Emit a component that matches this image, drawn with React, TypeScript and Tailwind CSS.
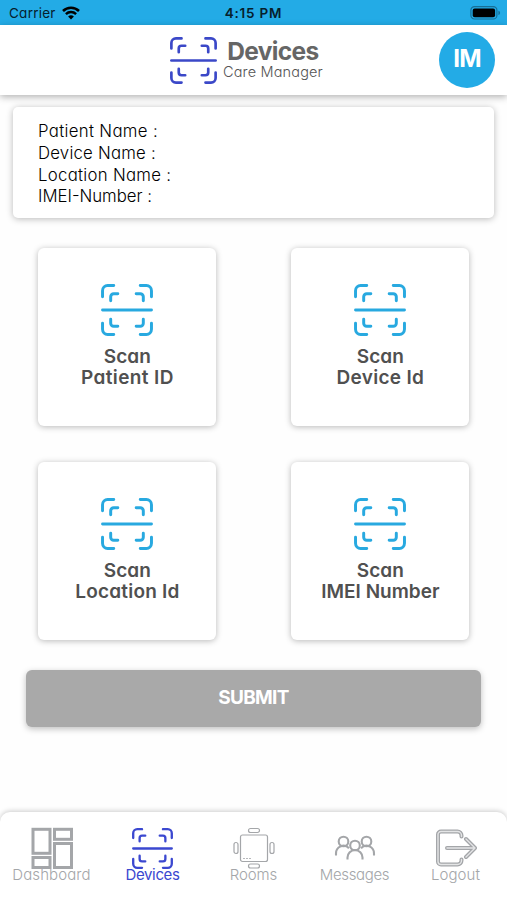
import React from 'react';

interface IconProps {
    className?: string;
}

interface TileProps {
    title: string;
    subject: string;
    tracking: string;
}

interface TabProps {
    label: string;
    active?: boolean;
    className?: string;
    children: React.ReactNode;
}

const ScanIcon: React.FC<IconProps> = ({ className }) => (
    <svg
        className={className}
        viewBox="-25.5 -25.5 51 51"
        fill="none"
        stroke="currentColor"
        strokeWidth="2.9"
        strokeLinecap="round"
    >
        <path d="M-24 -13v-6a5 5 0 0 1 5-5h6M13 -24h6a5 5 0 0 1 5 5v6M24 13v6a5 5 0 0 1-5 5h-6M-13 24h-6a5 5 0 0 1-5-5v-6" />
        <path d="M-16 -9v-4a3 3 0 0 1 3-3h4M9 -16h4a3 3 0 0 1 3 3v4M16 9v4a3 3 0 0 1-3 3h-4M-9 16h-4a3 3 0 0 1-3-3v-4" />
        <path d="M-24 0h48" />
    </svg>
);

const StatusBar: React.FC = () => (
    <div className="relative flex h-[25px] items-center justify-between bg-[#23abe6] pt-[3px] pl-[9px] pr-[6px] text-[#06202c]">
        <div className="flex items-center gap-[6px]">
            <span className="text-[13.5px] leading-none tracking-[0.25px]">Carrier</span>
            <svg className="-mt-[2px] h-[14px] w-[18px]" viewBox="0 0 18 14" fill="none" stroke="black">
                <path d="M1 5a11.5 11.5 0 0 1 16 0" strokeWidth="2.6" />
                <path d="M3.9 8.1a7.3 7.3 0 0 1 10.2 0" strokeWidth="2.4" />
                <path d="M9 13.6L6.1 10.6a4.2 4.2 0 0 1 5.8 0z" fill="black" stroke="none" />
            </svg>
        </div>
        <span className="absolute inset-x-0 text-center text-[13.5px] font-semibold leading-none tracking-[0.8px]">
            4:15 PM
        </span>
        <svg className="-mt-[2px] h-[14px] w-[31px]" viewBox="0 0 31 14">
            <rect x="0.9" y="0.6" width="26" height="12.4" rx="3.6" fill="none" stroke="#176f96" strokeWidth="1.2" />
            <rect x="2.7" y="2.4" width="22.4" height="8.8" rx="2" fill="black" />
            <path d="M28.4 4.7c2.2.7 2.2 3.6 0 4.3z" fill="#176f96" />
        </svg>
    </div>
);

const Header: React.FC = () => (
    <header className="relative flex h-[70px] items-center bg-white pl-[170px] shadow-[0_2px_7px_rgba(0,0,0,0.3)]">
        <ScanIcon className="h-[47px] w-[47px] text-[#3b48c8]" />
        <div className="ml-[6px] flex flex-col items-center pb-[1px]">
            <h1 className="text-[24.5px] font-bold leading-[25px] tracking-[-0.65px] text-[#666]">Devices</h1>
            <p className="-mt-[1px] text-[14.5px] font-light leading-[17px] tracking-[0.15px] text-[#555]">
                Care Manager
            </p>
        </div>
        <div className="ml-auto mr-[12px] flex h-14 w-14 items-center justify-center rounded-full bg-[#23abe6] pb-[3px] text-[24px] font-bold tracking-[-0.9px] text-white">
            IM
        </div>
    </header>
);

const Tile: React.FC<TileProps> = ({ title, subject, tracking }) => (
    <button className="flex h-[178px] w-[178px] flex-col items-center rounded-md bg-white pt-[36px] shadow-[0_1px_6px_rgba(0,0,0,0.28)]">
        <ScanIcon className="h-[52px] w-[52px] text-[#28a9e0]" />
        <span className="mt-[11px] text-[19px] font-semibold leading-[20.5px] tracking-[0.1px] text-[#505050]">
            {title}
        </span>
        <span className={`text-[19px] font-semibold leading-[20.5px] text-[#505050] ${tracking}`}>
            {subject}
        </span>
    </button>
);

const Tab: React.FC<TabProps> = ({ label, active, className, children }) => (
    <div
        className={`flex flex-1 flex-col items-center ${active ? 'text-[#3b48d0]' : 'text-[#a4a6a9]'}`}
    >
        <div className="flex h-[42px] items-center">{children}</div>
        <span className={`-mt-[2px] text-[15px] leading-[15px] ${className}`}>{label}</span>
    </div>
);

const App: React.FC = () => {
    return (
        <div className="flex h-[900px] w-[507px] flex-col overflow-hidden bg-[#fefefe] font-['Inter','Open_Sans',sans-serif] [font-feature-settings:'cv11','ss03']">
            <StatusBar />
            <Header />

            <section className="mx-[13px] mt-[12.4px] h-[111px] rounded-[5px] bg-white pt-[14px] pl-[25px] text-[16.8px] font-light leading-[21.6px] text-black shadow-[0_1px_7px_rgba(0,0,0,0.28)]">
                <p className="tracking-[0.32px]">Patient Name :</p>
                <p className="tracking-[0.2px]">Device Name :</p>
                <p className="tracking-[0.28px]">Location Name :</p>
                <p className="tracking-normal">IMEI-Number :</p>
            </section>

            <main className="ml-[38.4px] mt-[30px] grid grid-cols-[178px_178px] gap-x-[75px] gap-y-[36px]">
                <Tile title="Scan" subject="Patient ID" tracking="tracking-[0.4px]" />
                <Tile title="Scan" subject="Device Id" tracking="tracking-[0.3px]" />
                <Tile title="Scan" subject="Location Id" tracking="tracking-[0.2px]" />
                <Tile title="Scan" subject="IMEI Number" tracking="tracking-normal" />
            </main>

            <button className="mx-[26px] mt-[30px] h-[57px] shrink-0 rounded-md bg-[#a9a9a9] pb-[2px] text-[19px] font-bold tracking-[-0.7px] text-white shadow-[0_2px_6px_rgba(0,0,0,0.25)]">
                SUBMIT
            </button>

            <nav className="mt-auto flex h-[88px] rounded-t-[10px] bg-white px-[1px] pt-[15px] shadow-[0_-1px_5px_rgba(0,0,0,0.2)]">
                <Tab label="Dashboard" className="font-light tracking-[0.1px]">
                    <svg className="h-[42px] w-[42px]" viewBox="0 0 42 42" fill="none" stroke="currentColor" strokeWidth="3">
                        <rect x="2" y="2.3" width="17" height="24" />
                        <rect x="23.5" y="2.3" width="17" height="10" />
                        <rect x="2" y="30.5" width="17" height="10" />
                        <rect x="23.5" y="16.5" width="17" height="24" />
                    </svg>
                </Tab>
                <Tab label="Devices" active className="tracking-[-0.35px]">
                    <ScanIcon className="h-[41px] w-[41px]" />
                </Tab>
                <Tab label="Rooms" className="font-light tracking-[-0.1px]">
                    <svg className="h-[42px] w-[42px]" viewBox="0 0 42 42" fill="none" stroke="currentColor" strokeWidth="1.2">
                        <rect x="7.5" y="8" width="27" height="26.5" rx="2" />
                        <rect x="15.5" y="1.5" width="11" height="4" rx="2" />
                        <rect x="15.5" y="37" width="11" height="4" rx="2" />
                        <rect x="1" y="15.5" width="4" height="11" rx="2" />
                        <rect x="37" y="15.5" width="4" height="11" rx="2" />
                        <path d="M10 31.5h9" strokeDasharray="2 1" strokeWidth="0.8" />
                    </svg>
                </Tab>
                <Tab label="Messages" className="font-light tracking-[-0.35px]">
                    <svg className="h-[42px] w-[42px]" viewBox="0 0 42 42" fill="none" stroke="currentColor" strokeWidth="2.1">
                        <circle cx="9.5" cy="14.5" r="4.8" />
                        <circle cx="32.5" cy="14.5" r="4.8" />
                        <circle cx="21" cy="18.5" r="4.8" />
                        <path d="M2 28.5v-2a7.5 7.5 0 0 1 13-5.3M40 28.5v-2a7.5 7.5 0 0 0-13-5.3M13.5 32.500v-2a7.5 7.5 0 0 1 15 0v2" />
                    </svg>
                </Tab>
                <Tab label="Logout" className="font-light tracking-[0.1px]">
                    <svg className="h-[42px] w-[42px]" viewBox="0 0 42 42" fill="none" strokeLinecap="round" strokeLinejoin="round">
                        <path d="M26.5 9.5v-1a4 4 0 0 0-4-4H6a3 3 0 0 0-3 3v27a3 3 0 0 0 3 3h16.5a4 4 0 0 0 4-4v-1M12 21h28M31 12l9 9-9 9" stroke="currentColor" strokeWidth="4" />
                        <path d="M26.5 9.5v-1a4 4 0 0 0-4-4H6a3 3 0 0 0-3 3v27a3 3 0 0 0 3 3h16.5a4 4 0 0 0 4-4v-1M12 21h28M31 12l9 9-9 9" stroke="#e4e5e6" strokeWidth="1.4" />
                    </svg>
                </Tab>
            </nav>
        </div>
    );
};

export default App;
